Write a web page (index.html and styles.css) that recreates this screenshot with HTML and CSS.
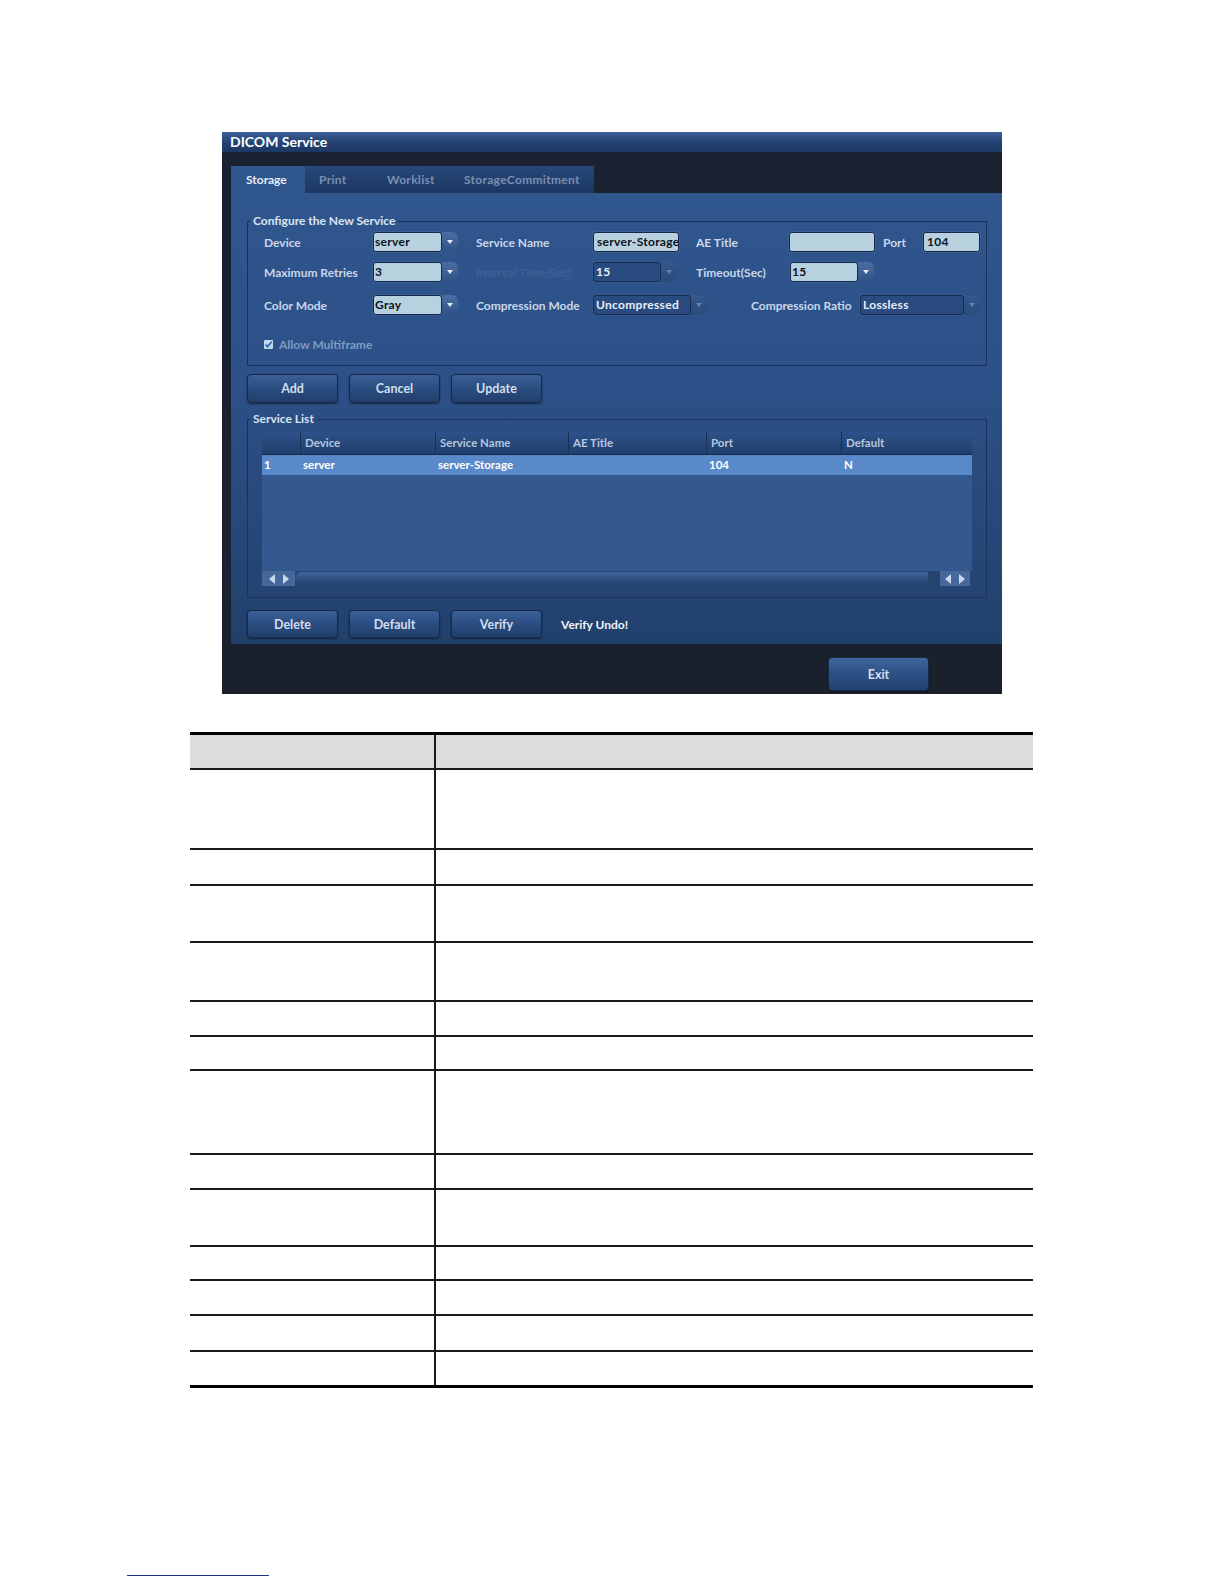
FILE: index.html
```html
<!DOCTYPE html>
<html lang="en">

<head>
    <meta charset="UTF-8">
    <title>DICOM Service</title>
    <link rel="stylesheet" href="styles.css">
</head>

<body>
    <div class="page">
        <div class="dialog">
            <div class="titlebar">DICOM Service</div>
            <div class="tabbar">
                <div class="tabs">
                    <span class="tab active">Storage</span>
                    <span class="tab t-print">Print</span>
                    <span class="tab t-work">Worklist</span>
                    <span class="tab t-commit">StorageCommitment</span>
                </div>
            </div>

            <div class="panel">
                <fieldset class="group">
                    <legend>Configure the New Service</legend>
                    <div class="cfg">
                        <div class="row">
                            <span class="lbl w109">Device</span>
                            <div class="combo w85"><span class="val">server</span><span class="arr"></span></div>
                            <span class="lbl w117 ml18">Service Name</span>
                            <span class="input w86">server-Storage</span>
                            <span class="lbl w93 ml17">AE Title</span>
                            <span class="input w86"></span>
                            <span class="lbl w40 ml8">Port</span>
                            <span class="input w57">104</span>
                        </div>
                        <div class="row r2">
                            <span class="lbl w109">Maximum Retries</span>
                            <div class="combo w85"><span class="val">3</span><span class="arr"></span></div>
                            <span class="lbl dim w117 ml18">Interval Time(Sec)</span>
                            <div class="combo off w84"><span class="val">15</span><span class="arr"></span></div>
                            <span class="lbl w94 ml19">Timeout(Sec)</span>
                            <div class="combo w84"><span class="val">15</span><span class="arr"></span></div>
                        </div>
                        <div class="row r3">
                            <span class="lbl w109">Color Mode</span>
                            <div class="combo w85"><span class="val">Gray</span><span class="arr"></span></div>
                            <span class="lbl w117 ml18">Compression Mode</span>
                            <div class="combo off w114"><span class="val">Uncompressed</span><span class="arr"></span></div>
                            <span class="lbl w109 ml44">Compression Ratio</span>
                            <div class="combo off w120"><span class="val">Lossless</span><span class="arr"></span></div>
                        </div>
                        <div class="row check-row">
                            <svg class="check" width="9" height="9" viewBox="0 0 9 9">
                                <rect x="0" y="0" width="9" height="9" rx="1" fill="#c3d9ea" />
                                <path d="M1.6 4.6 L3.6 6.8 L7.6 1.8" fill="none" stroke="#2a64b0" stroke-width="1.7" />
                            </svg>
                            <span class="lbl faint">Allow Multiframe</span>
                        </div>
                    </div>
                </fieldset>

                <div class="actions top-actions">
                    <button class="btn">Add</button>
                    <button class="btn">Cancel</button>
                    <button class="btn">Update</button>
                </div>

                <fieldset class="group list-group">
                    <legend>Service List</legend>
                    <div class="list">
                        <div class="list-row list-head">
                            <span></span>
                            <span>Device</span>
                            <span>Service Name</span>
                            <span>AE Title</span>
                            <span>Port</span>
                            <span>Default</span>
                        </div>
                        <div class="list-body">
                            <div class="list-row sel">
                                <span>1</span>
                                <span>server</span>
                                <span>server-Storage</span>
                                <span></span>
                                <span>104</span>
                                <span>N</span>
                            </div>
                        </div>
                        <div class="sb">
                            <span class="sb-btns"><i class="tri-l"></i><i class="tri-r"></i></span>
                            <span class="sb-track"></span>
                            <span class="sb-btns right"><i class="tri-l"></i><i class="tri-r"></i></span>
                        </div>
                    </div>
                </fieldset>

                <div class="actions bottom-actions">
                    <button class="btn">Delete</button>
                    <button class="btn">Default</button>
                    <button class="btn">Verify</button>
                    <span class="note">Verify Undo!</span>
                </div>
            </div>

            <div class="footer">
                <button class="btn exit">Exit</button>
            </div>
        </div>

        <div class="doc">
            <div class="doc-row doc-head"><span></span><span></span></div>
            <div class="doc-row h80"><span></span><span></span></div>
            <div class="doc-row h36"><span></span><span></span></div>
            <div class="doc-row h57"><span></span><span></span></div>
            <div class="doc-row h59"><span></span><span></span></div>
            <div class="doc-row h35"><span></span><span></span></div>
            <div class="doc-row h34"><span></span><span></span></div>
            <div class="doc-row h84"><span></span><span></span></div>
            <div class="doc-row h35"><span></span><span></span></div>
            <div class="doc-row h57"><span></span><span></span></div>
            <div class="doc-row h34"><span></span><span></span></div>
            <div class="doc-row h35"><span></span><span></span></div>
            <div class="doc-row h36"><span></span><span></span></div>
            <div class="doc-row doc-last"><span></span><span></span></div>
        </div>

        <div class="foot-link"></div>
    </div>
</body>

</html>
```

FILE: styles.css
```css
body {
    margin: 0;
    background: #fff;
    font-family: Lato, 'Open Sans', sans-serif;
}

.page {
    width: 1224px;
    padding-top: 132px;
}

/* ---------- dialog ---------- */

.dialog {
    width: 780px;
    margin-left: 222px;
    background: #1a2130;
}

.titlebar {
    height: 20px;
    line-height: 20px;
    padding-left: 8px;
    background: linear-gradient(#3a5e95, #22406f 60%, #1c3764);
    color: #fff;
    font-size: 14px;
    font-weight: 700;
}

.tabbar {
    height: 27px;
    padding: 14px 0 0 9px;
}

.tabs {
    display: flex;
    width: 363px;
    height: 27px;
    background: linear-gradient(#284879, #1d3762);
}

.tab {
    box-sizing: border-box;
    padding-left: 12px;
    line-height: 27px;
    font-size: 12px;
    font-weight: 700;
    color: #7990b4;
    letter-spacing: 0.3px;
}

.tab.active {
    width: 74px;
    padding-left: 15px;
    background: #30568e;
    color: #e4ebf5;
    letter-spacing: 0;
}

.t-print { width: 70px; padding-left: 14px; }
.t-work { width: 77px; }
.t-commit { width: 142px; }

.panel {
    margin-left: 9px;
    padding: 21px 15px 6px 16px;
    background: linear-gradient(#30568e, #2c5087 45%, #22406c);
}

.group {
    margin: 0;
    padding: 0;
    border: 1px solid #1b3056;
}

.group legend {
    margin-left: 2px;
    padding: 0 3px;
    line-height: 14px;
    font-size: 12px;
    font-weight: 700;
    color: #d9e4f3;
}

.cfg {
    padding: 4px 0 14px 16px;
}

.row {
    display: flex;
    align-items: center;
    height: 20px;
}

.r2 { margin-top: 10px; }
.r3 { margin-top: 13px; }

.check-row {
    height: 14px;
    margin-top: 22px;
}

.check {
    margin-right: 6px;
}

.lbl {
    font-size: 12px;
    font-weight: 700;
    color: #c9d7eb;
    white-space: nowrap;
}

.lbl.dim { color: #3d6197; }
.lbl.faint { color: #7f9bc3; }

.w40 { width: 40px; }
.w57 { width: 57px; }
.w84 { width: 84px; }
.w85 { width: 85px; }
.w86 { width: 86px; }
.w93 { width: 93px; }
.w94 { width: 94px; }
.w109 { width: 109px; }
.w114 { width: 114px; }
.w117 { width: 117px; }
.w120 { width: 120px; }
.ml8 { margin-left: 8px; }
.ml17 { margin-left: 17px; }
.ml18 { margin-left: 18px; }
.ml19 { margin-left: 19px; }
.ml44 { margin-left: 44px; }

.input,
.combo .val {
    box-sizing: border-box;
    height: 20px;
    line-height: 18px;
    padding-left: 3px;
    background: #b8d1de;
    border: 1px solid #15274a;
    border-radius: 3px;
    box-shadow: 0 0 0 1px #4a70a366;
    font-size: 12px;
    font-weight: 700;
    letter-spacing: 0.3px;
    color: #0b1322;
    white-space: nowrap;
    overflow: hidden;
}

.combo {
    display: flex;
    height: 20px;
}

.combo .val {
    flex: 1;
    padding-left: 1px;
}

.combo .arr {
    position: relative;
    width: 16px;
    background: linear-gradient(#4a6ea1, #2e5285);
    border-radius: 0 6px 6px 0;
}

.combo .arr::after {
    content: "";
    position: absolute;
    left: 5px;
    top: 8px;
    border-left: 3px solid transparent;
    border-right: 3px solid transparent;
    border-top: 4px solid #e4ecf6;
}

.combo.off .val {
    background: #294b80;
    border-color: #192d50;
    box-shadow: 0 0 0 1px #3e64984d;
    color: #e8eef7;
    padding-left: 2px;
}

.combo.off .arr {
    background: linear-gradient(#34598d, #294a7c);
}

.combo.off .arr::after {
    border-top-color: #6483b0;
}

/* ---------- buttons ---------- */

.actions {
    display: flex;
    align-items: center;
    gap: 11px;
}

.top-actions {
    margin: 8px 0 9px;
}

.bottom-actions {
    margin-top: 12px;
}

.btn {
    width: 91px;
    height: 29px;
    padding: 0;
    border: 1px solid #172a49;
    border-radius: 4px;
    background: linear-gradient(#3a6199, #2b4d80 50%, #223f6c);
    box-shadow: 0 1px 2px #0007;
    font-family: Lato, 'Open Sans', sans-serif;
    font-size: 12.5px;
    font-weight: 700;
    color: #d3deee;
}

.bottom-actions .btn {
    height: 28px;
}

.note {
    margin-left: 8px;
    font-size: 12px;
    font-weight: 700;
    color: #f0f4fa;
}

/* ---------- service list ---------- */

.list {
    width: 710px;
    margin: 6px 0 11px 14px;
}

.list-row {
    display: grid;
    grid-template-columns: 38px 135px 133px 138px 135px 1fr;
}

.list-head {
    height: 22px;
    line-height: 22px;
    background: linear-gradient(#2d5189, #223f6c);
    border-bottom: 1px solid #17294a;
    font-size: 11.5px;
    font-weight: 700;
    color: #b5c7df;
}

.list-head span {
    padding-left: 4px;
    border-left: 1px solid #1a2f52;
}

.list-head span:first-child {
    border-left: none;
}

.list-body {
    height: 116px;
    background: #33598f;
}

.sel {
    height: 20px;
    line-height: 20px;
    background: #5a89c9;
    font-size: 11.5px;
    font-weight: 700;
    color: #fff;
}

.sel span {
    padding-left: 3px;
}

.sel span:first-child {
    padding-left: 2px;
}

.sb {
    display: flex;
    height: 15px;
    background: #25436d;
}

.sb-btns {
    display: flex;
    align-items: center;
    justify-content: center;
    gap: 8px;
    width: 33px;
    background: #46679a;
}

.sb-btns.right {
    width: 30px;
    margin-left: 12px;
}

.tri-l,
.tri-r {
    width: 0;
    height: 0;
    border-top: 5px solid transparent;
    border-bottom: 5px solid transparent;
}

.tri-l { border-right: 6px solid #c9d8ec; }
.tri-r { border-left: 6px solid #c9d8ec; }

.sb-track {
    width: 633px;
    margin: 1px 0;
    border-radius: 7px 2px 2px 7px;
    background: linear-gradient(#41669b, #2d4f80 60%, #25446f);
}

/* ---------- footer ---------- */

.footer {
    display: flex;
    justify-content: flex-end;
    box-sizing: border-box;
    height: 50px;
    padding: 13px 73px 0 0;
    background: #1b212c;
}

.btn.exit {
    width: 101px;
    height: 34px;
    background: linear-gradient(#3c659c, #2d5085 50%, #24426f);
}

/* ---------- document table ---------- */

.doc {
    width: 843px;
    margin: 38px 0 0 190px;
    border-top: 3px solid #000;
}

.doc-row {
    display: grid;
    grid-template-columns: 246px 1fr;
    box-sizing: border-box;
    border-bottom: 2px solid #1a1a1a;
}

.doc-row span:first-child {
    border-right: 2px solid #1a1a1a;
}

.doc-head {
    height: 35px;
    background: #dcdcdc;
}

.h34 { height: 34px; }
.h35 { height: 35px; }
.h36 { height: 36px; }
.h57 { height: 57px; }
.h59 { height: 59px; }
.h80 { height: 80px; }
.h84 { height: 84px; }

.doc-last {
    height: 36px;
    border-bottom: 3px solid #000;
}

.foot-link {
    width: 142px;
    margin: 187px 0 0 127px;
    border-top: 1px solid #23308f;
}
```
